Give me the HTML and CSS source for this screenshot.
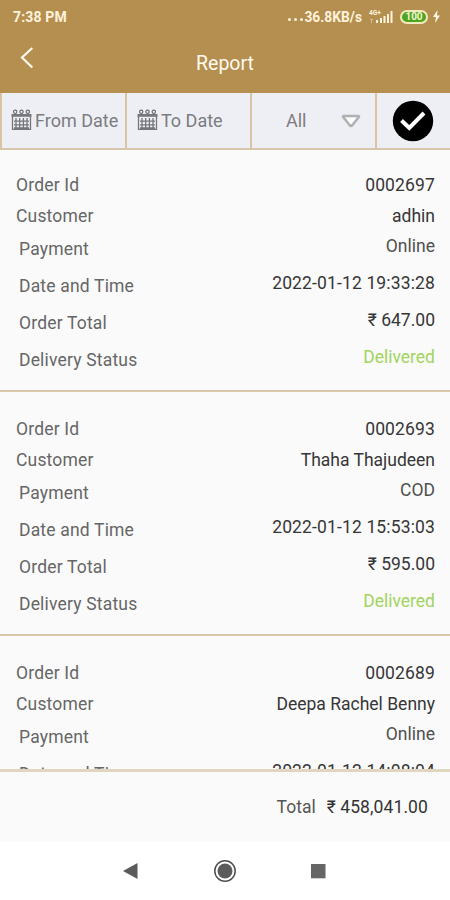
FILE: index.html
```html
<!DOCTYPE html>
<html lang="en">
<head>
<meta charset="utf-8">
<title>Report</title>
<link rel="stylesheet" href="styles.css">
</head>
<body>
<svg class="defs" width="0" height="0">
  <symbol id="calendar" viewBox="0 0 21 22">
    <path d="M1.500 7v13.300h18V7M5 9v10M8.700 9v10M12.400 9v10M16 9v10M3 12.200h15M3 15.800h15M3 19h15" fill="none" stroke="#74767a" stroke-width="1.300"/>
    <path d="M.5 5h20v2.800H.5z" fill="#77797d"/>
    <g fill="#eeeff3" stroke="#66686c" stroke-width="1.100"><circle cx="4.200" cy="2.800" r="1.700"/><circle cx="10.500" cy="2.800" r="1.700"/><circle cx="16.800" cy="2.800" r="1.700"/></g>
  </symbol>
</svg>
<div class="screen">
  <header class="top">
    <div class="status">
      <span class="time">7:38 PM</span>
      <div class="status-right">
        <span class="dots"><i></i><i></i><i></i></span><span class="speed">36.8KB/s</span>
        <svg class="signal" width="25" height="16" viewBox="0 0 25 16"><g fill="#fff3dc"><path d="M8 11h2v3H8zM12 9h2v5h-2zM15.500 7h2v7h-2zM19 5h2v9h-2zM22.500 2h2v12h-2z"/><path d="M2 10h3v1H4v3H3v-3H2z" opacity=".45"/><text x="1" y="5.500" font-size="6.500" font-weight="700">4G+</text></g></svg>
        <span class="battery">100</span>
        <svg class="bolt" width="9" height="13" viewBox="0 0 9 13"><path d="M5.500 0 1 7h3l-1 6 5-7.500H5z" fill="#fff6e4"/></svg>
      </div>
    </div>
    <div class="bar">
      <svg class="back" width="14" height="22" viewBox="0 0 14 22"><path d="M12.300 1 2 10.500 12.300 20.500" fill="none" stroke="#fffaf0" stroke-width="2.200"/></svg>
      <h1>Report</h1>
    </div>
  </header>
  <section class="filters">
    <div class="filter"><svg class="cal" width="21" height="22"><use href="#calendar"/></svg><span>From Date</span></div>
    <div class="filter"><svg class="cal" width="21" height="22"><use href="#calendar"/></svg><span>To Date</span></div>
    <div class="filter select"><span>All</span><svg width="20" height="14" viewBox="0 0 20 14"><path d="M3 2h14q1.500 0 .6 1.300L11.500 11q-1.500 1.500-3 0L2.400 3.300Q1.500 2 3 2z" fill="#fdfdfd" stroke="#b0b1b4" stroke-width="2.600"/></svg></div>
    <div class="filter submit"><svg width="42" height="42" viewBox="0 0 42 42"><circle cx="21" cy="21" r="20.200" fill="#000"/><path d="M9.500 20.500 17.300 28 32 13" fill="none" stroke="#fff" stroke-width="4"/></svg></div>
  </section>
  <main class="orders">
    <article class="order">
      <div class="row near"><span>Order Id</span><b class="num">0002697</b></div>
      <div class="row near"><span>Customer</span><b>adhin</b></div>
      <div class="row"><span>Payment</span><b class="soft">Online</b></div>
      <div class="row"><span>Date and Time</span><b class="num">2022-01-12 19:33:28</b></div>
      <div class="row"><span>Order Total</span><b>₹ 647.00</b></div>
      <div class="row"><span>Delivery Status</span><b class="done">Delivered</b></div>
    </article>
    <article class="order">
      <div class="row near"><span>Order Id</span><b class="num">0002693</b></div>
      <div class="row near"><span>Customer</span><b>Thaha Thajudeen</b></div>
      <div class="row"><span>Payment</span><b class="soft">COD</b></div>
      <div class="row"><span>Date and Time</span><b class="num">2022-01-12 15:53:03</b></div>
      <div class="row"><span>Order Total</span><b>₹ 595.00</b></div>
      <div class="row"><span>Delivery Status</span><b class="done">Delivered</b></div>
    </article>
    <article class="order">
      <div class="row near"><span>Order Id</span><b class="num">0002689</b></div>
      <div class="row near"><span>Customer</span><b>Deepa Rachel Benny</b></div>
      <div class="row"><span>Payment</span><b class="soft">Online</b></div>
      <div class="row"><span>Date and Time</span><b class="num">2022-01-12 14:08:04</b></div>
    </article>
  </main>
  <footer class="total"><span>Total</span><b>₹ 458,041.00</b></footer>
  <nav class="nav">
    <svg width="450" height="58" viewBox="0 0 450 58"><path d="M123 29 137.500 21v16z" fill="#5b5b5b"/><circle cx="225" cy="29" r="10.200" fill="none" stroke="#4f4f4f" stroke-width="1.500"/><circle cx="225" cy="29" r="7.500" fill="#5b5b5b"/><path d="M311 22h14.500v14.300H311z" fill="#666"/></svg>
  </nav>
</div>
</body>
</html>
```
FILE: styles.css
```css
* { box-sizing: border-box; }
body { margin: 0; font-family: Roboto, "Noto Sans", sans-serif; background: #fff; }
.defs { display: block; height: 0; }
.screen { width: 450px; height: 900px; display: flex; flex-direction: column; overflow: hidden; }
.top { height: 93px; background: #b58f4f; color: #fffaf0; flex: none; }
.status { height: 33px; display: flex; justify-content: space-between; align-items: center; padding: 0 9px 0 13px; font-weight: 700; font-size: 14px; color: #fff3dc; }
.time { letter-spacing: .15px; }
.status-right { display: flex; align-items: center; }
.dots { display: flex; gap: 3px; margin: 6px 1px 0 0; }
.dots i { width: 3px; height: 3px; border-radius: 50%; background: #fff3dc; }
.speed { font-size: 13.800px; }
.signal { margin: 0 7px 0 6px; }
.battery { width: 28px; height: 14px; border: 2px solid #f3e9bf; border-radius: 7px; background: #4fa51f; font-size: 10px; line-height: 10px; text-align: center; color: #f2f5d0; }
.bolt { margin-left: 4px; }
.bar { height: 60px; position: relative; display: flex; justify-content: center; align-items: center; }
.back { position: absolute; left: 20px; top: 14px; }
h1 { margin: 0; font-size: 19.500px; font-weight: 400; letter-spacing: 0; }
.filters { height: 57px; flex: none; display: grid; grid-template-columns: 127px 125px 125px 1fr; background: #eeeff4; border-bottom: 2px solid #d6c5ab; }
.filter { display: flex; align-items: center; border-right: 2px solid #d8c3a3; color: #7b7c80; font-size: 18px; padding-left: 9px; }
.filter + .filter { padding-left: 10px; }
.filter:first-child { border-left: 2px solid #d8c3a3; }
.filter span { margin-left: 3px; white-space: nowrap; }
.filter .cal { margin-top: -2px; flex: none; }
.filter.select { justify-content: space-between; padding: 0 14px 0 31px; }
.filter.submit { border: 0; padding-left: 15px; }
.orders { height: 619px; flex: none; overflow: hidden; background: #fafafa; }
.order { height: 244px; padding: 20px 15px 0; border-bottom: 2px solid #d6c7ab; }
.order:first-child { height: 242px; }
.order + .order { padding-top: 22px; }
.row { display: flex; justify-content: space-between; height: 37px; line-height: 36px; font-size: 17.500px; color: #666; padding-left: 4px; }
.row span { letter-spacing: .18px; margin-top: -1px; }
.row b { font-weight: 400; color: #363636; margin-top: -4px; }
.row b.num { letter-spacing: .14px; }
.near { height: 31px; line-height: 31px; padding-left: 1px; }
.near span, .near b { margin-top: 0; }
.row.near span, .row.near b { margin-top: 0; }
.row b.soft { color: #505050; }
.row b.done { color: #a2d45e; }
.total { height: 73px; flex: none; background: #fafafa; border-top: 3px solid #e0d5bf; display: flex; justify-content: flex-end; align-items: center; gap: 11px; padding: 0 22px 1px 0; font-size: 17.500px; color: #555; }
.total b { font-weight: 400; color: #333; letter-spacing: .1px; }
.nav { height: 58px; flex: none; }
.nav svg { display: block; }
```
